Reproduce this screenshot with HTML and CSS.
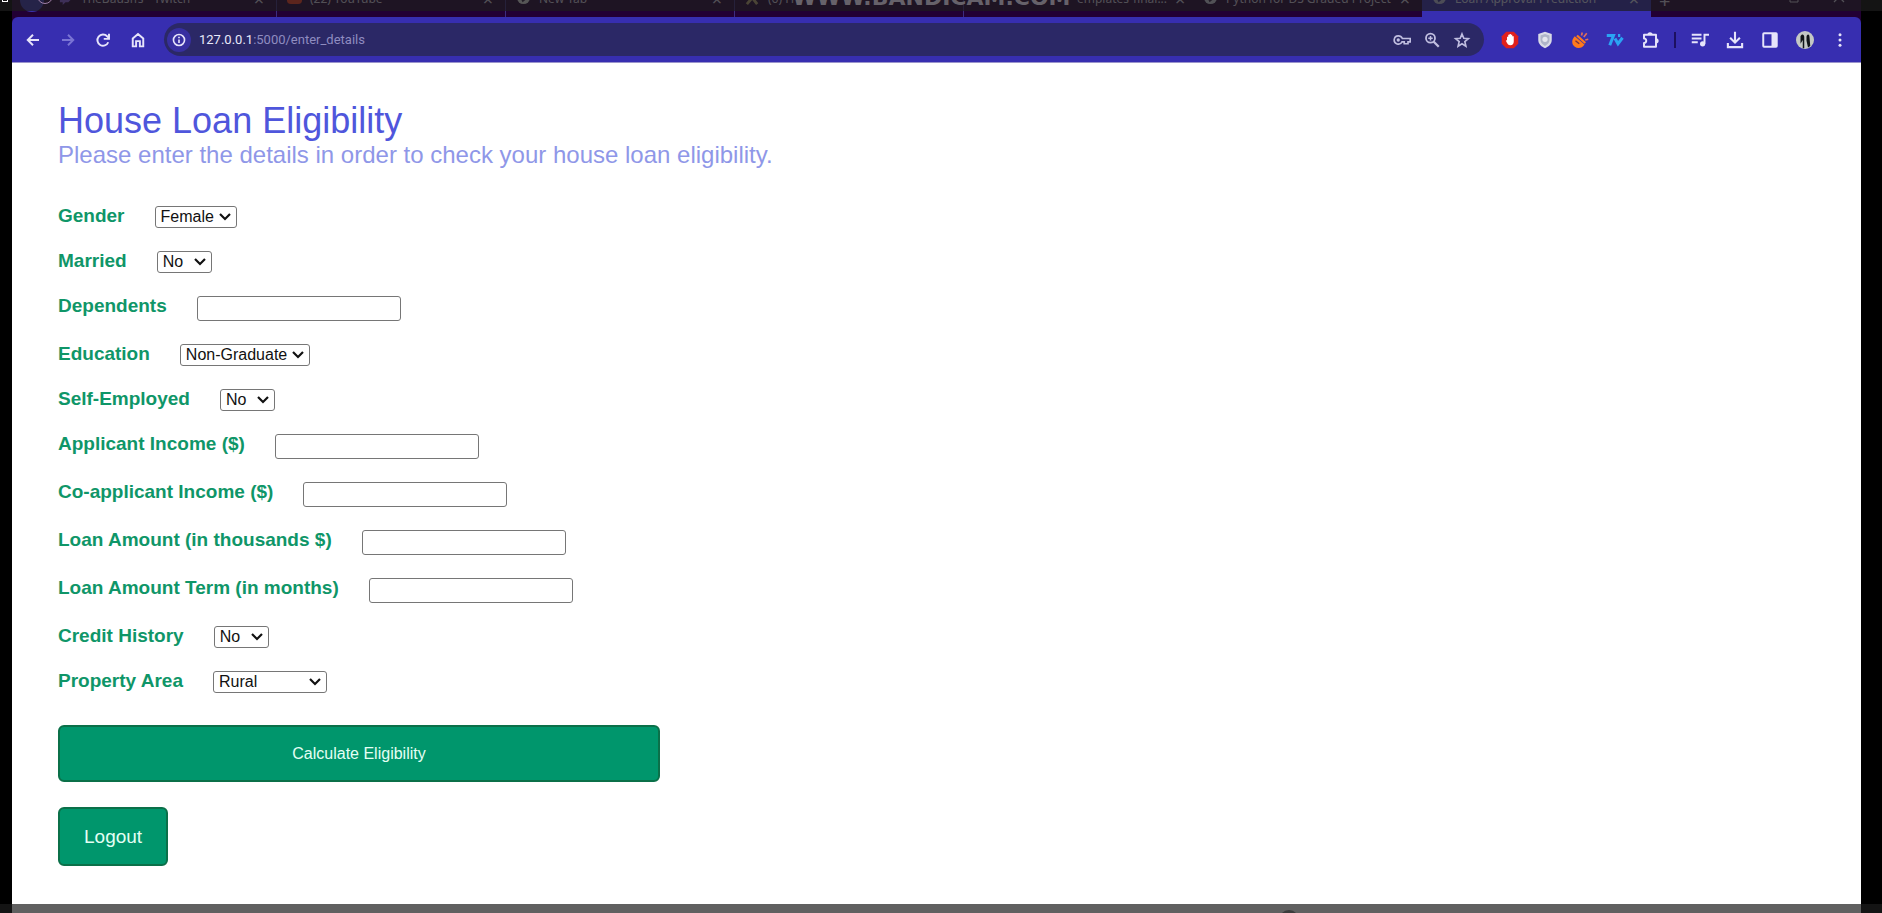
FILE: index.html
```html
<!DOCTYPE html>
<html lang="en">
<head>
<meta charset="utf-8">
<title>Loan Approval Prediction</title>
<link rel="stylesheet" href="styles.css">
</head>
<body>
<div class="screen">
  <div class="browser">
    <div class="tabstrip">
      <span class="profile-dot"></span>
      <div class="tab"><svg class="fav" viewBox="0 0 16 16"><path fill="#8a5ce0" d="M2 1h13v8l-4 4H8l-3 3v-3H2z"/></svg><span class="tab-title">TheBausffs - Twitch</span><span class="close">×</span></div>
      <div class="tab"><svg class="fav" viewBox="0 0 16 16"><rect y="2" width="16" height="13" rx="4" fill="#f03a20"/></svg><span class="tab-title">(22) YouTube</span><span class="close">×</span></div>
      <div class="tab"><svg class="fav" viewBox="0 0 16 16"><circle cx="8" cy="8" r="7" fill="#ddd"/><path d="M8 5l4 4-5 4-2-4z" fill="#332040"/></svg><span class="tab-title">New Tab</span><span class="close">×</span></div>
      <div class="tab"><svg class="fav" viewBox="0 0 16 16"><path d="M2 1l11 14M14 1L2 15" stroke="#b5a070" stroke-width="3"/></svg><span class="tab-title">(6) H</span></div>
      <div class="tab tab-end"><span class="tab-title">emplates-final...</span><span class="close">×</span></div>
      <div class="tab"><svg class="fav" viewBox="0 0 16 16"><circle cx="8" cy="8" r="7" fill="#ccd"/><path d="M8 5l4 4-5 4-2-4z" fill="#332040"/></svg><span class="tab-title">Python for DS Graded Project</span><span class="close">×</span></div>
      <div class="tab tab-active"><svg class="fav" viewBox="0 0 16 16"><circle cx="8" cy="8" r="7" fill="#bbd"/><path d="M8 5l4 4-5 4-2-4z" fill="#332e90"/></svg><span class="tab-title">Loan Approval Prediction</span><span class="close">×</span></div>
      <span class="new-tab">+</span>
      <div class="window-buttons">
        <svg class="win" viewBox="0 0 12 12"><path d="M1 3h8v8H1zM3 1h8v8" fill="none" stroke="currentColor"/></svg>
        <svg class="win" viewBox="0 0 12 12"><path d="M1 1l10 10M11 1L1 11" fill="none" stroke="currentColor" stroke-width="1.3"/></svg>
      </div>
    </div>

    <div class="toolbar">
      <button class="icon-btn" aria-label="Back"><svg viewBox="0 0 24 24"><path d="M20 12H5M12 5l-7 7 7 7" fill="none" stroke="currentColor" stroke-width="2.6"/></svg></button>
      <button class="icon-btn faded" aria-label="Forward"><svg viewBox="0 0 24 24"><path d="M4 12h15M12 5l7 7-7 7" fill="none" stroke="currentColor" stroke-width="2.6"/></svg></button>
      <button class="icon-btn" aria-label="Reload"><svg viewBox="0 0 24 24"><path d="M19 15A7.500 7.500 0 1 1 17.500 7L20 9.500M20 3.500v7h-7" fill="none" stroke="currentColor" stroke-width="2.600"/></svg></button>
      <button class="icon-btn" aria-label="Home"><svg viewBox="0 0 24 24"><path d="M5 10l7-6 7 6V20.500h-4.500v-7h-5v7H5z" fill="none" stroke="currentColor" stroke-width="2.600"/></svg></button>

      <div class="address">
        <span class="site-info"><svg viewBox="0 0 24 24"><circle cx="12" cy="12" r="9.500" fill="none" stroke="currentColor" stroke-width="2.800"/><path d="M12 11v6M12 6.500v2.500" stroke="currentColor" stroke-width="2.800"/></svg></span>
        <span class="url"><span class="host">127.0.0.1</span>:5000/enter_details</span>
        <button class="icon-btn pale" aria-label="Passwords"><svg viewBox="0 0 24 24"><path d="M7 6.500a5.500 5.500 0 1 0 5 8H15V17h5v-2.500h3v-4.500H12.500A6 6 0 0 0 7 6.500z" fill="none" stroke="currentColor" stroke-width="2.200"/><circle cx="7" cy="12" r="2.200" fill="currentColor"/></svg></button>
        <button class="icon-btn pale" aria-label="Zoom"><svg viewBox="0 0 24 24"><circle cx="10" cy="9.500" r="6" fill="none" stroke="currentColor" stroke-width="2.400"/><path d="M14 14l7 7" stroke="currentColor" stroke-width="3"/><path d="M7 9.500h6M10 6.500v6" stroke="currentColor" stroke-width="2"/></svg></button>
        <button class="icon-btn pale" aria-label="Bookmark"><svg viewBox="0 0 24 24"><path d="M12 4l2.400 5.700 6.100.5-4.700 4 1.400 6-5.200-3.200L6.800 20.200l1.400-6-4.700-4 6.100-.5z" fill="none" stroke="currentColor" stroke-width="2.200"/></svg></button>
      </div>

      <button class="icon-btn" aria-label="Ad blocker"><svg viewBox="0 0 24 24"><path d="M7 1h10l6 6v10l-6 6H7l-6-6V7z" fill="#e0201c"/><path d="M8 12V7.500h1.600V5h1.800V4h1.800v1h1.800v2H17v7c0 3-1.500 5-4.500 5S8.500 17 6.500 13z" fill="#fff"/></svg></button>
      <button class="icon-btn" aria-label="Shield"><svg viewBox="0 0 24 24"><path d="M12 1l9 3v8c0 5-4 9-9 11-5-2-9-6-9-11V4z" fill="#d9dbe6"/><path d="M12 4l6 2v6c0 4-3 6-6 8-3-2-6-4-6-8V6z" fill="#aeb4c8"/><circle cx="12" cy="11" r="3.500" fill="#e4e6ee"/></svg></button>
      <button class="icon-btn" aria-label="Extension"><svg viewBox="0 0 24 24"><path d="M5 7l13 11c-3 5-9 6-13 3s-5-9 0-14z" fill="#ff7a1c"/><path d="M8 6l11 10" stroke="#ff7a1c" stroke-width="3"/><path d="M14 6l1-4M17 8l4-5M19 12l4-1" stroke="#e0705a" stroke-width="2.200"/><path d="M6 13l5 4" stroke="#7a3440" stroke-width="2"/></svg></button>
      <button class="icon-btn" aria-label="7TV"><svg viewBox="0 0 24 24"><path d="M1 6h9L5 19M12 10l4 7 6-8M16 6h3" fill="none" stroke="#2aa4f4" stroke-width="4"/></svg></button>
      <button class="icon-btn" aria-label="Extensions"><svg viewBox="0 0 24 24"><path d="M4 5h16v16H4v-5c4 0 4-6 0-6z" fill="none" stroke="currentColor" stroke-width="2.600" stroke-linejoin="round"/><path d="M8.500 5a3.500 3.500 0 0 1 7 0zM20 9.500a3.500 3.500 0 0 1 0 7z" fill="currentColor"/></svg></button>
      <span class="divider"></span>
      <button class="icon-btn" aria-label="Media"><svg viewBox="0 0 24 24"><path d="M1 5h13M1 10h13M1 15h8M18 17V5h6" fill="none" stroke="currentColor" stroke-width="2.600"/><circle cx="15.500" cy="17" r="3.500" fill="currentColor"/></svg></button>
      <button class="icon-btn" aria-label="Downloads"><svg viewBox="0 0 24 24"><path d="M12 1v14M5.500 9l6.500 6.500L18.500 9M2.500 16v5.500h19v-5.500" fill="none" stroke="currentColor" stroke-width="2.800"/></svg></button>
      <button class="icon-btn" aria-label="Side panel"><svg viewBox="0 0 24 24"><rect x="3" y="3" width="18" height="18" rx="1" fill="none" stroke="currentColor" stroke-width="2.600"/><path d="M14 3h7v18h-7z" fill="currentColor"/></svg></button>
      <button class="icon-btn" aria-label="Profile"><svg viewBox="0 0 24 24"><circle cx="12" cy="12" r="12" fill="#c4c8c4"/><path d="M6 7c2-4 5-2 5 1v15H9V12l-3 5zM14 8c0-4 4-5 4 0l1 12-3 2-2-9z" fill="#101418"/></svg></button>
      <button class="icon-btn" aria-label="Menu"><svg viewBox="0 0 24 24"><g fill="currentColor"><circle cx="12" cy="5" r="2"/><circle cx="12" cy="12" r="2"/><circle cx="12" cy="19" r="2"/></g></svg></button>
    </div>

    <main class="page">
      <h1 class="title">House Loan Eligibility</h1>
      <p class="subtitle">Please enter the details in order to check your house loan eligibility.</p>
      <form class="form">
        <div class="field"><label for="gender">Gender</label><select id="gender" class="select"><option>Female</option><option>Male</option></select></div>
        <div class="field"><label for="married">Married</label><select id="married" class="select"><option>No</option><option>Yes</option></select></div>
        <div class="field"><label for="dependents">Dependents</label><input id="dependents" class="input" type="text"></div>
        <div class="field"><label for="education">Education</label><select id="education" class="select"><option>Non-Graduate</option><option>Graduate</option></select></div>
        <div class="field"><label for="self">Self-Employed</label><select id="self" class="select"><option>No</option><option>Yes</option></select></div>
        <div class="field"><label for="income">Applicant Income ($)</label><input id="income" class="input" type="text"></div>
        <div class="field"><label for="coincome">Co-applicant Income ($)</label><input id="coincome" class="input" type="text"></div>
        <div class="field"><label for="amount">Loan Amount (in thousands $)</label><input id="amount" class="input" type="text"></div>
        <div class="field"><label for="term">Loan Amount Term (in months)</label><input id="term" class="input" type="text"></div>
        <div class="field"><label for="credit">Credit History</label><select id="credit" class="select"><option>No</option><option>Yes</option></select></div>
        <div class="field"><label for="area">Property Area</label><select id="area" class="select"><option>Rural</option><option>Semi-Urban</option><option>Urban</option></select></div>
        <button class="btn btn-wide" type="submit">Calculate Eligibility</button>
      </form>
      <a class="btn btn-logout" href="#">Logout</a>
    </main>
  </div>
  <div class="shade shade-top"></div>
  <span class="watermark">WWW.BANDICAM.COM</span>
  <span class="corner-mark"></span>
  <span class="ring"></span>
  <div class="shade shade-bottom"><span class="knob"></span></div>
</div>
</body>
</html>
```
FILE: styles.css
```css
* { box-sizing: border-box; }

body {
  margin: 0;
  background: #000;
  font-family: "Liberation Sans", Arial, sans-serif;
}

.screen {
  position: relative;
  min-height: 100vh;
  padding: 0 21px 0 12px;
  display: flex;
  overflow: hidden;
}

.browser {
  flex: 1;
  min-width: 0;
  display: flex;
  flex-direction: column;
  background: #220034;
}

/* Tab strip, cut off by the top of the screen */
.tabstrip {
  height: 17px;
  padding-left: 8px;
  display: flex;
  align-items: flex-end;
  overflow: hidden;
  font: 12px/16px "Noto Sans", sans-serif;
  color: #d0c8dc;
}

.profile-dot {
  flex: none;
  width: 24px;
  height: 24px;
  margin: 0 4px 5px 0;
  border-radius: 50%;
  background: #3a34b0;
}

.tab {
  flex: 0 1 229px;
  min-width: 0;
  height: 32px;
  padding: 0 12px 10px 10px;
  display: flex;
  align-items: flex-end;
  gap: 8px;
  border-right: 1px solid #3c2c80;
}

.tab:nth-child(n+6) { border-right: 0; }

.tab-end { padding-left: 113px; }

.tab-active {
  background: #372eb0;
  color: #d8d8f0;
}

.tab-title {
  flex: 1;
  white-space: nowrap;
}

.fav {
  flex: none;
  width: 15px;
  height: 15px;
  margin-bottom: 2px;
}

.close { font-size: 18px; }

.new-tab {
  padding: 0 8px 8px;
  font-size: 20px;
}

.window-buttons {
  margin-left: auto;
  padding: 0 16px 14px 0;
  display: flex;
  gap: 32px;
}

.win {
  width: 12px;
  height: 12px;
}

/* Toolbar */
.toolbar {
  height: 46px;
  padding: 0 12px;
  display: flex;
  align-items: center;
  gap: 17px;
  background: #372eb0;
  border-bottom: 1px solid #9a94cc;
  border-radius: 6px 6px 0 0;
  color: #e6e4fa;
}

.icon-btn {
  flex: none;
  width: 18px;
  height: 18px;
  padding: 0;
  border: 0;
  background: none;
  color: inherit;
}

.icon-btn svg,
.site-info svg {
  display: block;
  width: 100%;
  height: 100%;
}

.faded { color: #7a74d4; }

.pale { color: #c0bee0; }

.address {
  flex: 1;
  height: 33px;
  padding: 0 13px 0 3px;
  display: flex;
  align-items: center;
  gap: 12px;
  border-radius: 17px;
  background: #2b2866;
}

.site-info {
  width: 24px;
  height: 24px;
  padding: 5px;
  border-radius: 50%;
  background: #372fa0;
}

.url {
  flex: 1;
  margin-left: -4px;
  font: 13px/18px Roboto, "Noto Sans", sans-serif;
  color: #8f8cc0;
}

.host { color: #e8e8fa; }

.divider {
  width: 2px;
  height: 16px;
  margin: 0 -2px;
  background: #1c1060;
}

/* Page */
.page {
  flex: 1;
  padding: 37px 46px 48px;
  background: #fff;
}

.title {
  margin: 0;
  font-size: 36px;
  font-weight: 400;
  line-height: 41px;
  color: #4f56dc;
}

.subtitle {
  margin: 0 0 37px;
  font-size: 24px;
  line-height: 28px;
  color: #8f97e8;
}

.form {
  display: flex;
  flex-direction: column;
  align-items: flex-start;
  gap: 23px;
}

.field {
  display: flex;
  align-items: baseline;
  gap: 30px;
  font-size: 19px;
  font-weight: 700;
  line-height: 20px;
  color: #0f9668;
}

.select,
.input {
  border: 1px solid #767676;
  border-radius: 3px;
  background: #fff;
  color: #111;
  font: 16px/20px "Liberation Sans", Arial, sans-serif;
}

.select {
  height: 22px;
  padding: 0 21px 0 5px;
  appearance: none;
  background: #fff url("data:image/svg+xml,%3Csvg xmlns='http://www.w3.org/2000/svg' viewBox='0 0 12 8'%3E%3Cpath d='M1 1l5 5 5-5' fill='none' stroke='%23111' stroke-width='2.200'/%3E%3C/svg%3E") no-repeat right 5px center / 12px 8px;
}

.input {
  width: 204px;
  height: 25px;
  padding: 0 3px 3px;
}

.btn {
  border: 2px solid #0b7049;
  border-radius: 6px;
  background: #00966c;
  color: #e4fff4;
  font-family: inherit;
  text-align: center;
  text-decoration: none;
}

.btn-wide {
  width: 602px;
  max-width: 100%;
  margin-top: 9px;
  padding: 16px;
  font-size: 16px;
  line-height: 21px;
}

.btn-logout {
  display: inline-block;
  margin-top: 25px;
  padding: 16px 24px;
  font-size: 19px;
  line-height: 23px;
}

/* Recorder overlays */
.shade {
  position: absolute;
  left: 0;
  right: 0;
  background: rgba(28, 28, 28, 0.7);
  overflow: hidden;
}

.shade-top {
  top: 0;
  height: 11px;
}

.shade-bottom {
  bottom: 0;
  height: 10px;
}

.knob {
  position: absolute;
  left: 68.5%;
  top: 6px;
  width: 20px;
  height: 20px;
  margin-left: -10px;
  border-radius: 50%;
  background: #3c3c3c;
}

.watermark {
  position: absolute;
  top: -19px;
  left: 42.1%;
  font: 700 22px/34px "DejaVu Sans", sans-serif;
  color: #66626a;
}

.corner-mark {
  position: absolute;
  top: -4px;
  left: 2px;
  width: 6px;
  height: 6px;
  border: 1px solid #fff;
}

.ring {
  position: absolute;
  top: -12px;
  left: 37px;
  width: 16px;
  height: 16px;
  border: 1px solid #a080a8;
  border-radius: 50%;
}
```
